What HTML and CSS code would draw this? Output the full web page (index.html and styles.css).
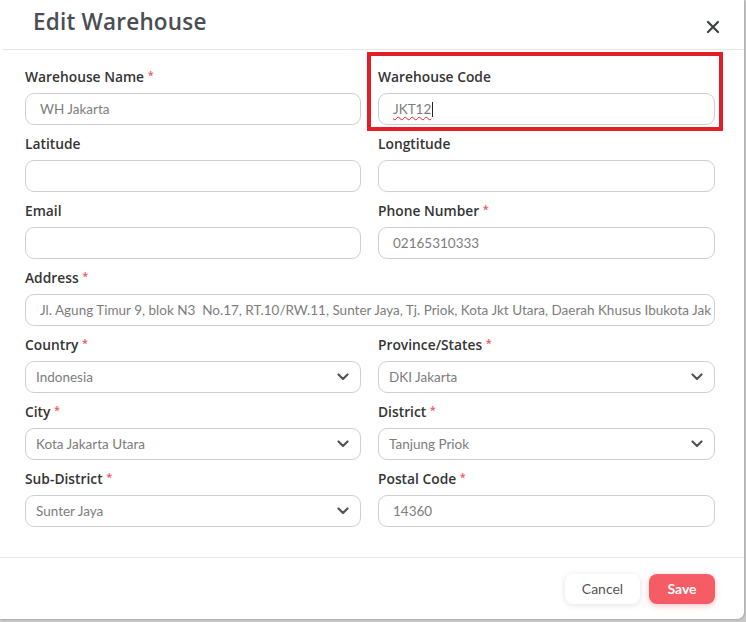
FILE: index.html
```html
<!DOCTYPE html>
<html lang="en">
<head>
<meta charset="utf-8">
<title>Edit Warehouse</title>
<link rel="stylesheet" href="styles.css">
</head>
<body>
<div class="modal">
  <header class="modal-header">
    <h1 class="modal-title">Edit Warehouse</h1>
    <button class="close" aria-label="Close">
      <svg width="14" height="14" viewBox="0 0 14 14"><path d="M2 2 L12 12 M12 2 L2 12" stroke="#3d4045" stroke-width="2.2" stroke-linecap="round"/></svg>
    </button>
  </header>
  <div class="modal-body">
    <div class="grid">
      <div class="group">
        <label class="label">Warehouse Name <span class="req">*</span></label>
        <div class="input">WH Jakarta</div>
      </div>
      <div class="group">
        <label class="label">Warehouse Code</label>
        <div class="input"><span class="typo">JKT12</span><span class="caret"></span></div>
        <div class="highlight"></div>
      </div>
      <div class="group">
        <label class="label">Latitude</label>
        <div class="input"></div>
      </div>
      <div class="group">
        <label class="label">Longtitude</label>
        <div class="input"></div>
      </div>
      <div class="group">
        <label class="label">Email</label>
        <div class="input"></div>
      </div>
      <div class="group">
        <label class="label">Phone Number <span class="req">*</span></label>
        <div class="input">02165310333</div>
      </div>
      <div class="group span2">
        <label class="label">Address <span class="req">*</span></label>
        <div class="input">Jl. Agung Timur 9, blok N3&nbsp; No.17, RT.10/RW.11, Sunter Jaya, Tj. Priok, Kota Jkt Utara, Daerah Khusus Ibukota Jak</div>
      </div>
      <div class="group">
        <label class="label">Country <span class="req">*</span></label>
        <div class="input select"><span>Indonesia</span><svg class="chev" width="12" height="8" viewBox="0 0 12 8"><path d="M1.5 1.5 L6 6 L10.5 1.5" fill="none" stroke="#555" stroke-width="2.2" stroke-linecap="round" stroke-linejoin="round"/></svg></div>
      </div>
      <div class="group">
        <label class="label">Province/States <span class="req">*</span></label>
        <div class="input select"><span>DKI Jakarta</span><svg class="chev" width="12" height="8" viewBox="0 0 12 8"><path d="M1.5 1.5 L6 6 L10.5 1.5" fill="none" stroke="#555" stroke-width="2.2" stroke-linecap="round" stroke-linejoin="round"/></svg></div>
      </div>
      <div class="group">
        <label class="label">City <span class="req">*</span></label>
        <div class="input select"><span>Kota Jakarta Utara</span><svg class="chev" width="12" height="8" viewBox="0 0 12 8"><path d="M1.5 1.5 L6 6 L10.5 1.5" fill="none" stroke="#555" stroke-width="2.2" stroke-linecap="round" stroke-linejoin="round"/></svg></div>
      </div>
      <div class="group">
        <label class="label">District <span class="req">*</span></label>
        <div class="input select"><span>Tanjung Priok</span><svg class="chev" width="12" height="8" viewBox="0 0 12 8"><path d="M1.5 1.5 L6 6 L10.5 1.5" fill="none" stroke="#555" stroke-width="2.2" stroke-linecap="round" stroke-linejoin="round"/></svg></div>
      </div>
      <div class="group">
        <label class="label">Sub-District <span class="req">*</span></label>
        <div class="input select"><span>Sunter Jaya</span><svg class="chev" width="12" height="8" viewBox="0 0 12 8"><path d="M1.5 1.5 L6 6 L10.5 1.5" fill="none" stroke="#555" stroke-width="2.2" stroke-linecap="round" stroke-linejoin="round"/></svg></div>
      </div>
      <div class="group">
        <label class="label">Postal Code <span class="req">*</span></label>
        <div class="input">14360</div>
      </div>
    </div>
  </div>
  <footer class="modal-footer">
    <button class="btn btn-cancel">Cancel</button>
    <button class="btn btn-save">Save</button>
  </footer>
</div>
</body>
</html>
```
FILE: styles.css
```css
* { box-sizing: border-box; }
html, body { margin: 0; padding: 0; }
body {
  background: #c9c9c9;
  font-family: Lato, "Open Sans", sans-serif;
  width: 746px;
  height: 622px;
  overflow: hidden;
}
.modal {
  width: 744px;
  height: 619px;
  background: #fff;
  border-radius: 0 0 7px 0;
  box-shadow: 1px 1px 2px rgba(0,0,0,0.15);
  display: flex;
  flex-direction: column;
}
.modal-header {
  height: 50px;
  border-bottom: 1px solid #e6e6e6;
  margin-left: 2px;
  display: flex;
  align-items: center;
  justify-content: space-between;
  padding: 0 24px 0 31px;
}
.modal-title {
  margin: 0;
  font-family: "Open Sans", Lato, sans-serif;
  font-size: 22.5px;
  font-weight: 600;
  letter-spacing: 0.2px;
  color: #4a4e54;
  padding-bottom: 6px;
}
.close {
  border: 0;
  background: none;
  padding: 0;
  margin-top: 4px;
  display: flex;
}
.modal-body {
  padding: 17px 30px 22px 25px;
  flex: 1;
}
.grid {
  display: grid;
  grid-template-columns: 336px 337px;
  column-gap: 17px;
  row-gap: 9px;
}
.span2 { grid-column: 1 / 3; }
.group {
  display: flex;
  flex-direction: column;
  position: relative;
}
.label {
  font-family: "Open Sans", Lato, sans-serif;
  font-size: 13.8px;
  font-weight: 600;
  color: #353535;
  line-height: 20px;
  height: 20px;
  margin-bottom: 6px;
}
.req {
  color: #f0545e;
  font-size: 11px;
  line-height: 0;
  position: relative;
  top: -3px;
}
.input {
  height: 32px;
  border: 1px solid #cfcfcf;
  border-radius: 9px;
  padding: 0 14px;
  font-size: 13.5px;
  color: #7d7d7d;
  display: flex;
  align-items: center;
  white-space: nowrap;
  overflow: hidden;
}
.select {
  padding: 0 10px 0 10px;
  justify-content: space-between;
}
.chev { flex: none; margin-right: 1px; }
.typo {
  text-decoration: underline wavy #e0262b;
  text-decoration-thickness: 1px;
  text-underline-offset: 2px;
}
.caret {
  display: inline-block;
  width: 1px;
  height: 15px;
  background: #222;
  margin-left: 1px;
}
.highlight {
  position: absolute;
  left: -11px;
  top: -15px;
  right: -8px;
  bottom: -6px;
  border: 4px solid #e41e26;
  pointer-events: none;
}
.modal-footer {
  height: 62px;
  border-top: 1px solid #e6e6e6;
  display: flex;
  justify-content: flex-end;
  align-items: center;
  gap: 9px;
  padding: 0 29px 0 0;
}
.btn {
  height: 30px;
  border: 0;
  border-radius: 8px;
  font-family: Lato, "Open Sans", sans-serif;
  font-size: 14px;
  cursor: pointer;
}
.btn-cancel {
  width: 75px;
  background: #fff;
  color: #555;
  box-shadow: 0 1px 6px rgba(0,0,0,0.12);
}
.btn-save {
  width: 66px;
  background: #f65c66;
  color: #fff;
  font-weight: 700;
  box-shadow: 0 2px 6px rgba(246,92,102,0.35);
}
```
